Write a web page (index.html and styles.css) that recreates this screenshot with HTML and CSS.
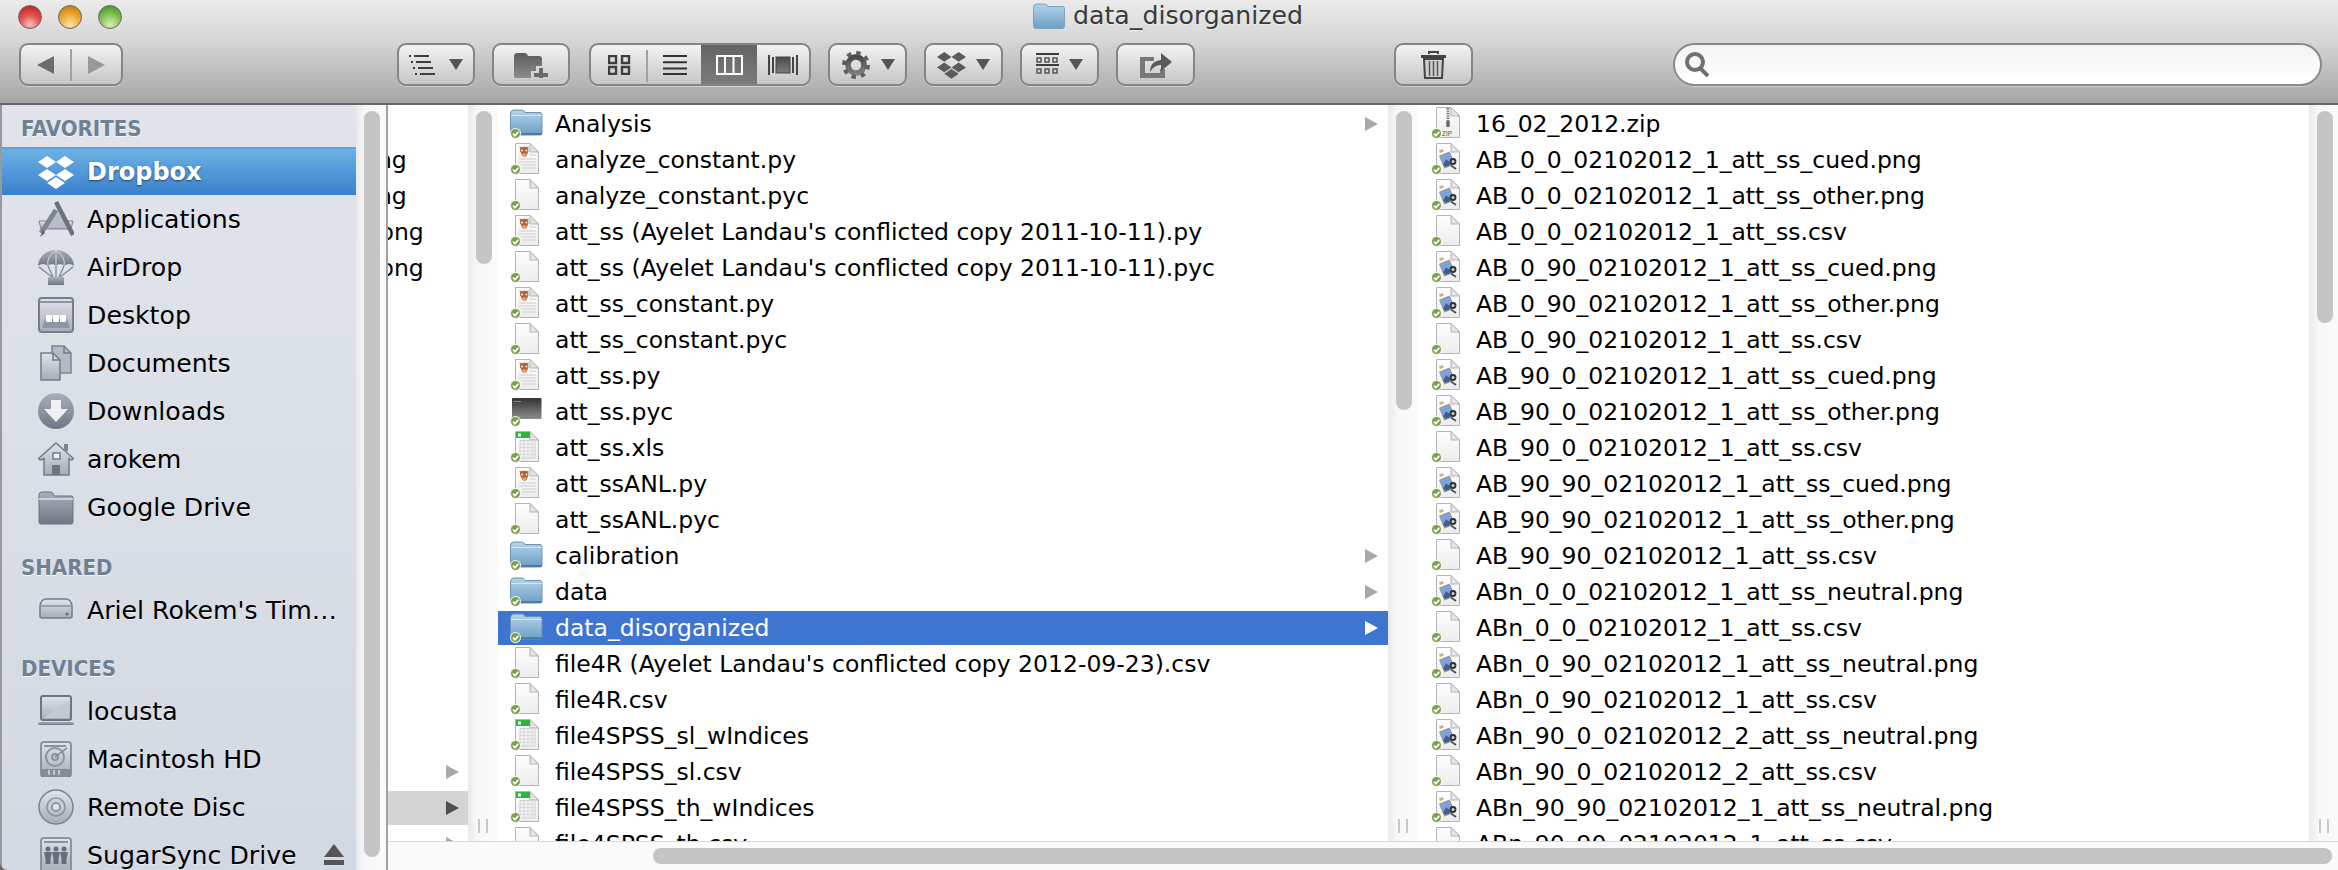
FILE: index.html
```html
<!DOCTYPE html>
<html lang="en">
<head>
    <meta charset="UTF-8">
    <title>data_disorganized</title>
    <link rel="stylesheet" href="styles.css">
</head>
<body>
    <svg class="defs" xmlns="http://www.w3.org/2000/svg">
        <defs>
            <linearGradient id="gDoc" x1="0" y1="0" x2="0" y2="1"><stop offset="0" stop-color="#fff"/><stop offset="1" stop-color="#ececec"/></linearGradient>
            <linearGradient id="gFolder" x1="0" y1="0" x2="0" y2="1"><stop offset="0" stop-color="#b4d3e9"/><stop offset="1" stop-color="#6e9fc6"/></linearGradient>
            <linearGradient id="gTerm" x1="0" y1="0" x2="0" y2="1"><stop offset="0" stop-color="#333"/><stop offset="1" stop-color="#8c8c8c"/></linearGradient>
            <linearGradient id="gSide" x1="0" y1="0" x2="0" y2="1"><stop offset="0" stop-color="#a9b0bc"/><stop offset="1" stop-color="#6f7786"/></linearGradient>
            <linearGradient id="gSideLight" x1="0" y1="0" x2="0" y2="1"><stop offset="0" stop-color="#e0e3e9"/><stop offset="1" stop-color="#a6adb9"/></linearGradient>
            <linearGradient id="gTool" x1="0" y1="0" x2="0" y2="1"><stop offset="0" stop-color="#4a4a4a"/><stop offset="1" stop-color="#7d7d7d"/></linearGradient>
            <linearGradient id="gFolderTool" x1="0" y1="0" x2="0" y2="1"><stop offset="0" stop-color="#5c5c5c"/><stop offset="1" stop-color="#8c8c8c"/></linearGradient>
            <g id="sync">
                <circle cx="5.500" cy="26.500" r="5.500" fill="#f4f4f4"/>
                <circle cx="5.500" cy="26.500" r="4.500" fill="#7aa14a"/>
                <path d="M3 26.600l2 2.100 3.300-4" fill="none" stroke="#fff" stroke-width="1.700"/>
            </g>
            <g id="page">
                <path d="M5.500 .5H20L28.500 9V30.500H5.500Z" fill="url(#gDoc)" stroke="#b4b4b4"/>
                <path d="M20 .5V9H28.500Z" fill="#e4e4e4" stroke="#b4b4b4"/>
            </g>
        </defs>
        <symbol id="f-folder" viewBox="0 0 34 34">
            <path d="M.5 7Q.5 3 4 3H12Q14 3 15 5.500H30Q32 5.500 32 8V26Q32 28 30 28H2.500Q.5 28 .5 26Z" fill="url(#gFolder)" stroke="#6a94b6"/>
            <path d="M1 8.500H32" stroke="#d5e6f2" stroke-width="1"/>
            <path d="M1 27H32" stroke="#4f7ea3" stroke-width="2"/>
            <use href="#sync"/>
        </symbol>
        <symbol id="f-blank" viewBox="0 0 34 34">
            <use href="#page"/><use href="#sync"/>
        </symbol>
        <symbol id="f-py" viewBox="0 0 34 34">
            <use href="#page"/>
            <path d="M8 3.500h4l-.5 3zM16 3.500h4l-2 3z" fill="#ddc9a6"/>
            <path d="M10 4.500Q14 3 18 4.500L18.500 8 16.500 13Q14.500 14.500 12.500 13L10 8Z" fill="#b8612f"/>
            <path d="M12.500 10.500h4v2.500h-4z" fill="#e2a27a"/>
            <circle cx="12" cy="7.500" r=".9" fill="#fff"/><circle cx="16.500" cy="7.500" r=".9" fill="#fff"/>
            <path d="M20 12H26M9 16H26M9 19H26M12 22H26M12 25H26" stroke="#cfcfcf" stroke-width="1"/>
            <use href="#sync"/>
        </symbol>
        <symbol id="f-term" viewBox="0 0 34 34">
            <rect x="2" y="3" width="29.500" height="21" rx="1" fill="url(#gTerm)"/>
            <path d="M4 6.500h7" stroke="#5fa35f" stroke-width="1"/>
            <use href="#sync"/>
        </symbol>
        <symbol id="f-xls" viewBox="0 0 34 34">
            <use href="#page"/>
            <path d="M6 1H20V7H6Z" fill="#2fb53c"/>
            <path d="M8 2.500h3v3h-3z" fill="#fff"/>
            <path d="M10 9.500H25V27H10Z" fill="#f2f2f2" stroke="#cfcfcf"/>
            <path d="M10 13H25M10 16.500H25M10 20H25M10 23.500H25M14 9.500V27M18 9.500V27M22 9.500V27" stroke="#d6d6d6" stroke-width=".8"/>
            <use href="#sync"/>
        </symbol>
        <symbol id="f-img" viewBox="0 0 34 34">
            <use href="#page"/>
            <path d="M8 7.500L12 6 13 8.500 9 10Z" fill="#c9b48f"/>
            <path d="M8.500 13L18.500 9 23.500 21 13.500 25Z" fill="#7ba4dc" stroke="#a08a6a" stroke-width=".8"/>
            <path d="M12 21.500l3-5 3.500 2 1 3.500-5 2z" fill="#3f5f8f"/>
            <circle cx="22" cy="18.500" r="3.400" fill="#333"/>
            <circle cx="22" cy="18.500" r="1.500" fill="#d0d0d0"/>
            <path d="M20 22.500L25 26" stroke="#555" stroke-width="2"/>
            <use href="#sync"/>
        </symbol>
        <symbol id="f-zip" viewBox="0 0 34 34">
            <use href="#page"/>
            <path d="M17 1V15" stroke="#777" stroke-width="3" stroke-dasharray="1.400 1"/>
            <rect x="15.300" y="14" width="3.400" height="6" rx="1" fill="#666"/>
            <text x="11" y="28.500" class="zip-label">ZIP</text>
            <use href="#sync"/>
        </symbol>

        <symbol id="s-dropbox" viewBox="0 0 36 36">
            <path d="M9 2L18 8 9 14 0 8ZM27 2L36 8 27 14 18 8ZM9 15L18 21 9 27 0 21ZM27 15L36 21 27 27 18 21ZM18 23L27 29 18 35 9 29Z" fill="currentColor"/>
        </symbol>
        <symbol id="s-apps" viewBox="0 0 36 36">
            <path d="M1 20H35L33 28H3Z" fill="url(#gSideLight)" stroke="#7c8492"/>
            <path d="M18 8L30 26H6Z" fill="#b9bfca"/>
            <path d="M18 1L35 34" stroke="#6a7280" stroke-width="4.500"/>
            <path d="M18 9L3 32" stroke="#7d8492" stroke-width="5"/>
            <path d="M5 29L2 36 7 32Z" fill="#5d6573"/>
        </symbol>
        <symbol id="s-air" viewBox="0 0 36 36">
            <path d="M0 17A18 16 0 0 1 36 17Q31 13 26 17 22 13 18 17 14 13 10 17 5 13 0 17Z" fill="url(#gSide)"/>
            <path d="M18 1Q8 8 10 17M18 1Q28 8 26 17M18 1V17" fill="none" stroke="#d6dae1" stroke-width="1"/>
            <path d="M1 18L14 28M35 18L22 28M10 17L15 28M26 17L21 28M18 17V28" stroke="#7c8492" stroke-width="1.200"/>
            <rect x="10" y="28" width="16" height="8" fill="url(#gSide)"/>
        </symbol>
        <symbol id="s-desk" viewBox="0 0 36 36">
            <rect x="1" y="1" width="34" height="34" rx="3" fill="url(#gSideLight)" stroke="#767e8c" stroke-width="2"/>
            <path d="M2 5H34" stroke="#8b93a1" stroke-width="2"/>
            <path d="M7 22H29L32 31H4Z" fill="#8e96a4"/>
            <rect x="8" y="18" width="6" height="7" rx="1" fill="#fff"/><rect x="15" y="18" width="6" height="7" rx="1" fill="#fff"/><rect x="22" y="18" width="6" height="7" rx="1" fill="#fff"/>
        </symbol>
        <symbol id="s-docs" viewBox="0 0 36 36">
            <path d="M14 1H26L33 8V28H14Z" fill="#b5bbc6" stroke="#7c8492" stroke-width="1.500"/>
            <path d="M3 8H15L22 15V35H3Z" fill="url(#gSideLight)" stroke="#747c8a" stroke-width="1.500"/>
            <path d="M15 8V15H22M26 1V8H33" fill="none" stroke="#747c8a" stroke-width="1.500"/>
        </symbol>
        <symbol id="s-down" viewBox="0 0 36 36">
            <circle cx="18" cy="18" r="18" fill="url(#gSide)"/>
            <path d="M13 7H23V16H30L18 29 6 16H13Z" fill="#eef0f3"/>
        </symbol>
        <symbol id="s-home" viewBox="0 0 36 36">
            <path d="M18 2L36 18 33 19 31 17.500V34H6V17.500L3 19 0 18Z" fill="url(#gSideLight)" stroke="#747c8a" stroke-width="1.500"/>
            <rect x="26" y="3" width="4" height="7" fill="#7c8492"/>
            <rect x="15" y="12" width="7" height="6" fill="#eef0f3" stroke="#747c8a" stroke-width="1.500"/>
            <rect x="14" y="24" width="8" height="10" fill="#6d7583"/>
        </symbol>
        <symbol id="s-folder" viewBox="0 0 36 36">
            <path d="M1 6Q1 3 4 3H13Q15 3 16 7H33Q35 7 35 9V33Q35 35 33 35H3Q1 35 1 33Z" fill="url(#gSide)" stroke="#6b7381"/>
            <path d="M1 10H35" stroke="#dfe2e7" stroke-width="1.500"/>
        </symbol>
        <symbol id="s-server" viewBox="0 0 36 36">
            <path d="M2 14Q3 7 8 7H28Q33 7 34 14V24Q34 26 32 26H4Q2 26 2 24Z" fill="url(#gSideLight)" stroke="#747c8a" stroke-width="1.500"/>
            <path d="M2 14H34" stroke="#8b93a1" stroke-width="1.500"/>
            <circle cx="29" cy="22" r="1.500" fill="#646c7a"/>
        </symbol>
        <symbol id="s-laptop" viewBox="0 0 36 36">
            <rect x="3" y="3" width="30" height="24" rx="2" fill="url(#gSideLight)" stroke="#6d7583" stroke-width="2"/>
            <path d="M5 25L31 7V25Z" fill="#c3c8d1"/>
            <path d="M1 29H35L36 31Q36 32 34 32H2Q0 32 0 31Z" fill="url(#gSide)"/>
        </symbol>
        <symbol id="s-hd" viewBox="0 0 36 36">
            <rect x="3" y="1" width="30" height="35" rx="3" fill="url(#gSideLight)" stroke="#767e8c" stroke-width="1.500"/>
            <path d="M6 5H28" stroke="#8a92a0" stroke-width="2"/>
            <circle cx="17" cy="16" r="9" fill="none" stroke="#8a92a0" stroke-width="2"/>
            <circle cx="17" cy="16" r="3" fill="none" stroke="#8a92a0" stroke-width="2"/>
            <path d="M17 16L29 7" stroke="#7c8492" stroke-width="1.500"/>
            <path d="M3 28H33V33Q33 35 31 35H5Q3 35 3 33Z" fill="#858d9b"/>
            <path d="M11 29V34M16 29V34M21 29V34" stroke="#d8dce2" stroke-width="1.500"/>
        </symbol>
        <symbol id="s-disc" viewBox="0 0 36 36">
            <circle cx="18" cy="18" r="17" fill="url(#gSideLight)" stroke="#7c8492" stroke-width="1.500"/>
            <circle cx="18" cy="18" r="9" fill="none" stroke="#8a92a0" stroke-width="1.500"/>
            <circle cx="18" cy="18" r="4" fill="#dfe2e7" stroke="#7c8492" stroke-width="1.500"/>
        </symbol>
        <symbol id="s-sugar" viewBox="0 0 36 36">
            <rect x="3" y="1" width="30" height="35" rx="3" fill="url(#gSideLight)" stroke="#767e8c" stroke-width="1.500"/>
            <path d="M6 5H30" stroke="#8a92a0" stroke-width="2"/>
            <g fill="#666e7c">
                <circle cx="10" cy="12" r="2.500"/><path d="M6 15H14L12.500 22V27H7.500V22Z"/>
                <circle cx="18" cy="12" r="2.500"/><path d="M14 15H22L20.500 22V27H15.500V22Z"/>
                <circle cx="26" cy="12" r="2.500"/><path d="M22 15H30L28.500 22V27H23.500V22Z"/>
            </g>
        </symbol>
    </svg>

    <div class="window">
        <header class="toolbar">
            <div class="titlebar">
                <div class="lights">
                    <span class="light red"></span>
                    <span class="light amber"></span>
                    <span class="light green"></span>
                </div>
                <div class="title">
                    <svg class="title-ico" viewBox="0 0 32 26"><path d="M.5 5Q.5 1 4 1H12Q14 1 15 3.500H30Q31.500 3.500 31.500 6V23Q31.500 25.500 29 25.500H3Q.5 25.500 .5 23Z" fill="url(#gFolder)" stroke="#7fa3bf"/></svg>
                    <span>data_disorganized</span>
                </div>
            </div>
            <div class="tools">
                <div class="btn nav">
                    <span class="nav-cell"><svg class="ico-nav" viewBox="0 0 17 18"><path d="M17 0V18L0 9Z" fill="#6c6c6c"/></svg></span>
                    <span class="nav-cell nav-fwd"><svg class="ico-nav" viewBox="0 0 17 18"><path d="M0 0V18L17 9Z" fill="#999"/></svg></span>
                </div>
                <div class="btn btn-list">
                    <svg class="ico-list" viewBox="0 0 26 20"><path d="M0 1h2M5 1h15M2 7h2M7 7h15M4 13h2M9 13h15M6 19h2M11 19h15" stroke="#3e3e3e" stroke-width="2"/></svg>
                    <span class="caret"></span>
                </div>
                <div class="btn btn-new">
                    <svg class="ico-new" viewBox="0 0 36 26"><path d="M1 5Q1 1 4 1H12Q14 1 15 4H26Q29 4 29 7V14H23V19H18V26H3Q1 26 1 24Z" fill="url(#gFolderTool)"/><path d="M26 16h4v5h5v4h-5v1h-4v-1h-5v-4h5z" fill="#6a6a6a"/></svg>
                </div>
                <div class="btn views">
                    <span class="view view-sep">
                        <svg class="ico-view" viewBox="0 0 24 20"><path d="M1 1h7v7h-7zM14 1h7v7h-7zM1 12h7v7h-7zM14 12h7v7h-7z" fill="none" stroke="#3f3f3f" stroke-width="2.400"/></svg>
                    </span>
                    <span class="view">
                        <svg class="ico-view" viewBox="0 0 24 20"><path d="M0 1H24M0 7.300H24M0 13.600H24M0 19H24" stroke="#333" stroke-width="2"/></svg>
                    </span>
                    <span class="view view-on">
                        <svg class="ico-cols" viewBox="0 0 27 20"><path d="M1 1H26V19H1ZM9 1V19M17.500 1V19" fill="none" stroke="#fff" stroke-width="2"/></svg>
                    </span>
                    <span class="view">
                        <svg class="ico-flow" viewBox="0 0 30 20"><path d="M1 0V20M5 2V18M25 2V18M29 0V20" stroke="#444" stroke-width="2"/><rect x="8" y="2" width="14" height="16" fill="url(#gTool)" stroke="#444"/></svg>
                    </span>
                </div>
                <div class="btn btn-drop">
                    <svg class="ico-gear" viewBox="0 0 30 28"><circle cx="15" cy="14" r="8" fill="none" stroke="url(#gTool)" stroke-width="5.500"/><circle cx="15" cy="14" r="12" fill="none" stroke="#5f5f5f" stroke-width="4" stroke-dasharray="4.400 5"/></svg>
                    <span class="caret"></span>
                </div>
                <div class="btn btn-drop">
                    <svg class="ico-box" viewBox="0 0 36 36"><use href="#s-dropbox"/></svg>
                    <span class="caret"></span>
                </div>
                <div class="btn btn-drop">
                    <svg class="ico-grid" viewBox="0 0 23 23"><path d="M0 1H23M0 12H23" stroke="#3c3c3c" stroke-width="2"/><path d="M1 5h4v4h-4zM9 5h4v4h-4zM17 5h4v4h-4zM1 16h4v4h-4zM9 16h4v4h-4zM17 16h4v4h-4z" fill="none" stroke="#555" stroke-width="1.500"/></svg>
                    <span class="caret"></span>
                </div>
                <div class="btn btn-share">
                    <svg class="ico-share" viewBox="0 0 32 26"><path d="M0 5H14V9H5V21H20V17H25V26H0Z" fill="#787878"/><path d="M10 20Q10 9 21 8V1L32 10 21 19V13Q14 13 10 20Z" fill="#5a5a5a"/></svg>
                </div>
                <div class="btn btn-trash">
                    <svg class="ico-trash" viewBox="0 0 27 28"><path d="M9 3V1H18V3" fill="none" stroke="#444" stroke-width="2"/><path d="M1 4H26V7H1Z" fill="#444"/><path d="M4 8H23L22 27H5Z" fill="#cfcfcf" stroke="#444" stroke-width="2"/><path d="M9.500 10V25M13.500 10V25M17.500 10V25" stroke="#555" stroke-width="1.500"/></svg>
                </div>
                <div class="search">
                    <svg class="ico-search" viewBox="0 0 25 25"><circle cx="11" cy="10" r="8" fill="none" stroke="#707070" stroke-width="4"/><path d="M16 16L24 24" stroke="#707070" stroke-width="4"/></svg>
                </div>
            </div>
        </header>

        <div class="main">
            <aside class="sidebar">
                <div class="side-list">
                    <div class="side-head head-fav">FAVORITES</div>
                    <div class="side-row side-on"><svg class="side-ico"><use href="#s-dropbox"/></svg><span>Dropbox</span></div>
                    <div class="side-row"><svg class="side-ico"><use href="#s-apps"/></svg><span>Applications</span></div>
                    <div class="side-row"><svg class="side-ico"><use href="#s-air"/></svg><span>AirDrop</span></div>
                    <div class="side-row"><svg class="side-ico"><use href="#s-desk"/></svg><span>Desktop</span></div>
                    <div class="side-row"><svg class="side-ico"><use href="#s-docs"/></svg><span>Documents</span></div>
                    <div class="side-row"><svg class="side-ico"><use href="#s-down"/></svg><span>Downloads</span></div>
                    <div class="side-row"><svg class="side-ico"><use href="#s-home"/></svg><span>arokem</span></div>
                    <div class="side-row"><svg class="side-ico"><use href="#s-folder"/></svg><span>Google Drive</span></div>
                    <div class="side-head head-shared">SHARED</div>
                    <div class="side-row"><svg class="side-ico"><use href="#s-server"/></svg><span>Ariel Rokem's Tim…</span></div>
                    <div class="side-head head-dev">DEVICES</div>
                    <div class="side-row"><svg class="side-ico"><use href="#s-laptop"/></svg><span>locusta</span></div>
                    <div class="side-row"><svg class="side-ico"><use href="#s-hd"/></svg><span>Macintosh HD</span></div>
                    <div class="side-row"><svg class="side-ico"><use href="#s-disc"/></svg><span>Remote Disc</span></div>
                    <div class="side-row">
                        <svg class="side-ico"><use href="#s-sugar"/></svg><span>SugarSync Drive</span>
                        <svg class="eject" viewBox="0 0 20 22"><path d="M10 0L20 13H0Z" fill="#555"/><rect y="16" width="20" height="5" fill="#555"/></svg>
                    </div>
                </div>
                <div class="gutter">
                    <div class="thumb thumb-side"></div>
                </div>
            </aside>

            <section class="browser">
                <div class="columns">
                    <div class="col col-a">
                        <div class="rows">
                            <div class="row row-empty"></div>
                            <div class="row clip clip-ng"><span>png</span></div>
                            <div class="row clip clip-ng"><span>png</span></div>
                            <div class="row clip clip-ong"><span>png</span></div>
                            <div class="row clip clip-ong"><span>png</span></div>
                            <div class="rows-gap"></div>
                            <div class="row"><i class="arrow"></i></div>
                            <div class="row row-grey"><i class="arrow"></i></div>
                            <div class="row"><i class="arrow"></i></div>
                        </div>
                    </div>
                    <div class="gutter">
                        <div class="thumb thumb-a"></div>
                        <div class="grip"></div>
                    </div>

                    <div class="col col-b">
                        <div class="rows">
                            <div class="row"><svg class="ico"><use href="#f-folder"/></svg><span>Analysis</span><i class="arrow"></i></div>
                            <div class="row"><svg class="ico"><use href="#f-py"/></svg><span>analyze_constant.py</span></div>
                            <div class="row"><svg class="ico"><use href="#f-blank"/></svg><span>analyze_constant.pyc</span></div>
                            <div class="row"><svg class="ico"><use href="#f-py"/></svg><span>att_ss (Ayelet Landau's conflicted copy 2011-10-11).py</span></div>
                            <div class="row"><svg class="ico"><use href="#f-blank"/></svg><span>att_ss (Ayelet Landau's conflicted copy 2011-10-11).pyc</span></div>
                            <div class="row"><svg class="ico"><use href="#f-py"/></svg><span>att_ss_constant.py</span></div>
                            <div class="row"><svg class="ico"><use href="#f-blank"/></svg><span>att_ss_constant.pyc</span></div>
                            <div class="row"><svg class="ico"><use href="#f-py"/></svg><span>att_ss.py</span></div>
                            <div class="row"><svg class="ico"><use href="#f-term"/></svg><span>att_ss.pyc</span></div>
                            <div class="row"><svg class="ico"><use href="#f-xls"/></svg><span>att_ss.xls</span></div>
                            <div class="row"><svg class="ico"><use href="#f-py"/></svg><span>att_ssANL.py</span></div>
                            <div class="row"><svg class="ico"><use href="#f-blank"/></svg><span>att_ssANL.pyc</span></div>
                            <div class="row"><svg class="ico"><use href="#f-folder"/></svg><span>calibration</span><i class="arrow"></i></div>
                            <div class="row"><svg class="ico"><use href="#f-folder"/></svg><span>data</span><i class="arrow"></i></div>
                            <div class="row row-on"><svg class="ico"><use href="#f-folder"/></svg><span>data_disorganized</span><i class="arrow"></i></div>
                            <div class="row"><svg class="ico"><use href="#f-blank"/></svg><span>file4R (Ayelet Landau's conflicted copy 2012-09-23).csv</span></div>
                            <div class="row"><svg class="ico"><use href="#f-blank"/></svg><span>file4R.csv</span></div>
                            <div class="row"><svg class="ico"><use href="#f-xls"/></svg><span>file4SPSS_sl_wIndices</span></div>
                            <div class="row"><svg class="ico"><use href="#f-blank"/></svg><span>file4SPSS_sl.csv</span></div>
                            <div class="row"><svg class="ico"><use href="#f-xls"/></svg><span>file4SPSS_th_wIndices</span></div>
                            <div class="row"><svg class="ico"><use href="#f-blank"/></svg><span>file4SPSS_th.csv</span></div>
                        </div>
                    </div>
                    <div class="gutter">
                        <div class="thumb thumb-b"></div>
                        <div class="grip"></div>
                    </div>

                    <div class="col col-c">
                        <div class="rows">
                            <div class="row"><svg class="ico"><use href="#f-zip"/></svg><span>16_02_2012.zip</span></div>
                            <div class="row"><svg class="ico"><use href="#f-img"/></svg><span>AB_0_0_02102012_1_att_ss_cued.png</span></div>
                            <div class="row"><svg class="ico"><use href="#f-img"/></svg><span>AB_0_0_02102012_1_att_ss_other.png</span></div>
                            <div class="row"><svg class="ico"><use href="#f-blank"/></svg><span>AB_0_0_02102012_1_att_ss.csv</span></div>
                            <div class="row"><svg class="ico"><use href="#f-img"/></svg><span>AB_0_90_02102012_1_att_ss_cued.png</span></div>
                            <div class="row"><svg class="ico"><use href="#f-img"/></svg><span>AB_0_90_02102012_1_att_ss_other.png</span></div>
                            <div class="row"><svg class="ico"><use href="#f-blank"/></svg><span>AB_0_90_02102012_1_att_ss.csv</span></div>
                            <div class="row"><svg class="ico"><use href="#f-img"/></svg><span>AB_90_0_02102012_1_att_ss_cued.png</span></div>
                            <div class="row"><svg class="ico"><use href="#f-img"/></svg><span>AB_90_0_02102012_1_att_ss_other.png</span></div>
                            <div class="row"><svg class="ico"><use href="#f-blank"/></svg><span>AB_90_0_02102012_1_att_ss.csv</span></div>
                            <div class="row"><svg class="ico"><use href="#f-img"/></svg><span>AB_90_90_02102012_1_att_ss_cued.png</span></div>
                            <div class="row"><svg class="ico"><use href="#f-img"/></svg><span>AB_90_90_02102012_1_att_ss_other.png</span></div>
                            <div class="row"><svg class="ico"><use href="#f-blank"/></svg><span>AB_90_90_02102012_1_att_ss.csv</span></div>
                            <div class="row"><svg class="ico"><use href="#f-img"/></svg><span>ABn_0_0_02102012_1_att_ss_neutral.png</span></div>
                            <div class="row"><svg class="ico"><use href="#f-blank"/></svg><span>ABn_0_0_02102012_1_att_ss.csv</span></div>
                            <div class="row"><svg class="ico"><use href="#f-img"/></svg><span>ABn_0_90_02102012_1_att_ss_neutral.png</span></div>
                            <div class="row"><svg class="ico"><use href="#f-blank"/></svg><span>ABn_0_90_02102012_1_att_ss.csv</span></div>
                            <div class="row"><svg class="ico"><use href="#f-img"/></svg><span>ABn_90_0_02102012_2_att_ss_neutral.png</span></div>
                            <div class="row"><svg class="ico"><use href="#f-blank"/></svg><span>ABn_90_0_02102012_2_att_ss.csv</span></div>
                            <div class="row"><svg class="ico"><use href="#f-img"/></svg><span>ABn_90_90_02102012_1_att_ss_neutral.png</span></div>
                            <div class="row"><svg class="ico"><use href="#f-blank"/></svg><span>ABn_90_90_02102012_1_att_ss.csv</span></div>
                        </div>
                    </div>
                    <div class="gutter">
                        <div class="thumb thumb-c"></div>
                        <div class="grip"></div>
                    </div>
                </div>
                <div class="hbar">
                    <div class="hthumb"></div>
                </div>
            </section>
        </div>
    </div>
</body>
</html>
```

FILE: styles.css
```css
* {
    box-sizing: border-box;
}
html, body {
    margin: 0;
    padding: 0;
    height: 100%;
    overflow: hidden;
}
body {
    background: #6b6b6b;
    font-family: "DejaVu Sans", Verdana, sans-serif;
    color: #000;
}
.defs {
    position: absolute;
    width: 0;
    height: 0;
}
.zip-label {
    font-family: "Liberation Sans", sans-serif;
    font-size: 6.500px;
    fill: #555;
}
.window {
    width: 2338px;
    height: 870px;
    display: flex;
    flex-direction: column;
    border-bottom-left-radius: 8px;
    overflow: hidden;
}

/* toolbar */
.toolbar {
    height: 105px;
    background: linear-gradient(#ebebeb, #d6d6d6 40%, #a6a6a6);
    border-bottom: 2px solid #666;
    flex: none;
}
.titlebar {
    height: 43px;
    display: grid;
    grid-template-columns: 1fr auto 1fr;
    align-items: start;
}
.lights {
    display: flex;
    gap: 16px;
    padding: 5px 0 0 18px;
}
.light {
    width: 24px;
    height: 24px;
    border-radius: 50%;
    border: 1px solid #6a6a6a;
}
.red {
    background: radial-gradient(circle at 50% 85%, #f3c3c3, #e85050 45%, #b51e1e);
}
.amber {
    background: radial-gradient(circle at 50% 85%, #fbe6a8, #eba72e 50%, #b56f10);
}
.green {
    background: radial-gradient(circle at 50% 85%, #d5eebc, #7fc14e 50%, #3d8526);
}
.title {
    display: flex;
    align-items: center;
    gap: 8px;
    font-size: 25.200px;
    line-height: 30px;
    color: #3a3a3a;
    padding: 1px 2px 0 0;
    text-shadow: 0 1px 0 rgba(255, 255, 255, 0.5);
}
.title-ico {
    width: 32px;
    height: 26px;
}
.tools {
    display: flex;
    height: 43px;
    padding-left: 19px;
}
.btn {
    height: 43px;
    display: flex;
    align-items: center;
    justify-content: center;
    border: 2px solid #858585;
    border-radius: 9px;
    background: linear-gradient(#f3f3f3, #c6c6c6);
    box-shadow: 0 1px 0 rgba(255, 255, 255, 0.35);
    flex: none;
    margin-left: 17px;
}
.nav {
    width: 104px;
    margin-left: 0;
    margin-right: 257px;
}
.nav-cell {
    flex: 1;
    height: 32px;
    display: flex;
    align-items: center;
    justify-content: center;
}
.nav-fwd {
    border-left: 2px solid #a2a2a2;
}
.ico-nav {
    width: 17px;
    height: 18px;
}
.btn-list {
    width: 78px;
    gap: 14px;
}
.btn-new {
    width: 78px;
}
.ico-list {
    width: 26px;
    height: 20px;
}
.ico-new {
    width: 36px;
    height: 26px;
}
.caret {
    width: 0;
    height: 0;
    border-left: 7px solid transparent;
    border-right: 7px solid transparent;
    border-top: 11px solid #555;
}
.views {
    width: 222px;
    margin-left: 19px;
    display: grid;
    grid-template-columns: 57px 53px 56px 1fr;
    overflow: hidden;
}
.view {
    height: 39px;
    display: flex;
    align-items: center;
    justify-content: center;
    position: relative;
}
.view-sep::after {
    content: "";
    position: absolute;
    right: 0;
    top: 5px;
    height: 32px;
    width: 2px;
    background: #a2a2a2;
}
.view-on {
    background: linear-gradient(#646464, #7c7c7c);
}
.ico-view {
    width: 24px;
    height: 20px;
}
.ico-cols {
    width: 27px;
    height: 20px;
}
.ico-flow {
    width: 30px;
    height: 20px;
}
.btn-drop {
    width: 79px;
    gap: 10px;
}
.ico-gear {
    width: 30px;
    height: 28px;
}
.ico-box {
    width: 29px;
    height: 30px;
    color: #5c5c5c;
}
.ico-grid {
    width: 23px;
    height: 23px;
}
.btn-share {
    width: 79px;
}
.ico-share {
    width: 32px;
    height: 26px;
}
.btn-trash {
    width: 79px;
    margin-left: 199px;
}
.ico-trash {
    width: 27px;
    height: 28px;
}
.search {
    width: 649px;
    height: 43px;
    margin-left: 200px;
    border: 2px solid #8a8a8a;
    border-radius: 22px;
    background: linear-gradient(#f4f4f4, #fff);
    box-shadow: 0 1px 0 rgba(255, 255, 255, 0.35);
    display: flex;
    align-items: center;
    padding-left: 9px;
}
.ico-search {
    width: 25px;
    height: 25px;
}

/* sidebar */
.main {
    flex: 1;
    display: flex;
    min-height: 0;
}
.sidebar {
    width: 388px;
    flex: none;
    display: flex;
    border-left: 2px solid #9a9a9a;
    border-right: 2px solid #a0a0a0;
}
.side-list {
    width: 354px;
    flex: none;
    background: linear-gradient(#e1e4ea, #d3d9e2);
    overflow: hidden;
}
.side-head {
    display: flex;
    align-items: flex-end;
    padding: 0 0 6px 19px;
    font-size: 22px;
    line-height: 24px;
    font-weight: bold;
    font-stretch: condensed;
    color: #707f92;
    text-shadow: 0 1px 0 rgba(255, 255, 255, 0.8);
}
.head-fav {
    height: 42px;
}
.head-shared {
    height: 55px;
}
.head-dev {
    height: 53px;
}
.side-row {
    height: 48px;
    display: flex;
    align-items: center;
    padding-left: 36px;
    font-size: 25.200px;
    white-space: nowrap;
    text-shadow: 0 1px 0 rgba(255, 255, 255, 0.5);
}
.side-ico {
    width: 36px;
    height: 36px;
    margin-right: 13px;
    flex: none;
}
.side-on {
    background: linear-gradient(#6cb1e5, #3a80cc);
    border-top: 2px solid #5ea5dd;
    color: #fff;
    font-weight: bold;
    font-size: 24px;
    text-shadow: 0 1px 2px rgba(0, 0, 0, 0.55);
}
.eject {
    width: 20px;
    height: 22px;
    margin-left: auto;
    margin-right: 12px;
}

/* scroll gutters */
.gutter {
    width: 30px;
    flex: none;
    display: flex;
    flex-direction: column;
    padding: 6px 0 8px 8px;
    background: linear-gradient(90deg, #e9e9e9, #f8f8f8 30%, #fafafa);
}
.thumb {
    width: 16px;
    border-radius: 8px;
    background: #c4c4c4;
}
.thumb-side {
    height: 746px;
}
.thumb-a {
    height: 153px;
}
.thumb-b {
    height: 299px;
}
.thumb-c {
    height: 212px;
}
.grip {
    width: 10px;
    height: 14px;
    margin: auto 0 0 2px;
    border-left: 2px solid #c8c8c8;
    border-right: 2px solid #c8c8c8;
}

/* file columns */
.browser {
    flex: 1;
    display: flex;
    flex-direction: column;
    min-width: 0;
}
.columns {
    height: 736px;
    display: flex;
    background: #fff;
    overflow: hidden;
}
.col {
    background: #fff;
    overflow: hidden;
    flex: none;
}
.col-a {
    width: 80px;
}
.col-b {
    width: 890px;
}
.col-c {
    width: 891px;
}
.rows {
    padding-top: 2px;
    display: flex;
    flex-direction: column;
    gap: 2px;
}
.row {
    height: 34px;
    flex: none;
    display: flex;
    align-items: center;
    padding: 0 10px 0 12px;
    font-size: 23.500px;
    line-height: 34px;
    white-space: nowrap;
}
.col-c .row {
    padding-left: 13px;
}
.col-a .row {
    padding: 0 9px 0 0;
}
.rows-gap {
    height: 466px;
    flex: none;
}
.ico {
    width: 34px;
    height: 34px;
    margin-right: 11px;
    flex: none;
}
.arrow {
    width: 0;
    height: 0;
    margin-left: auto;
    border-top: 7px solid transparent;
    border-bottom: 7px solid transparent;
    border-left: 13px solid #a8a8a8;
}
.row-on {
    background: #3d75d1;
    color: #fff;
}
.row-on .arrow {
    border-left-color: #fff;
}
.row-grey {
    background: #d4d4d4;
}
.row-grey .arrow {
    border-left-color: #4f4f4f;
}
.clip span {
    flex: none;
}
.clip-ng span {
    margin-left: -26px;
}
.clip-ong span {
    margin-left: -9px;
}

/* horizontal scroll bar */
.hbar {
    flex: 1;
    padding: 6px 6px 0 265px;
    background: #fafafa;
    border-top: 1px solid #d8d8d8;
}
.hthumb {
    height: 16px;
    border-radius: 8px;
    background: #c4c4c4;
}
```
